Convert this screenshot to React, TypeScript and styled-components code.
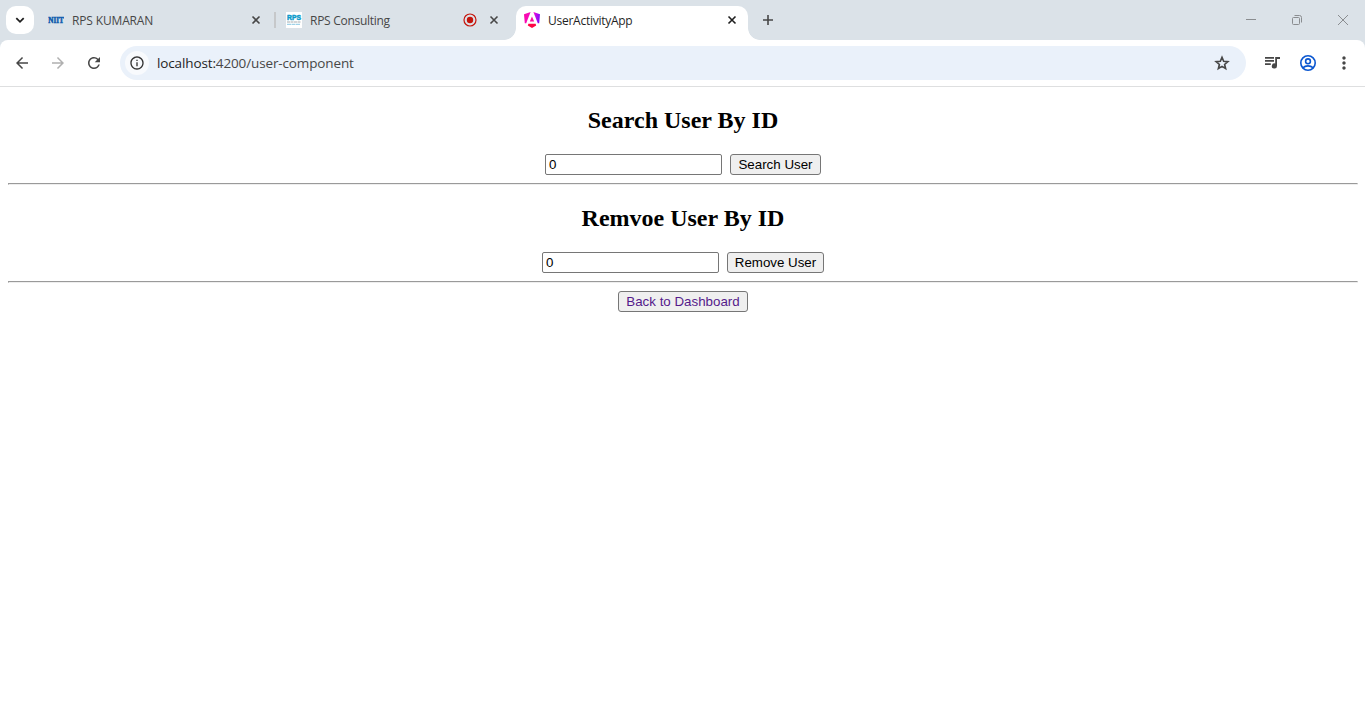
import React, { useState } from "react";
import styled, { createGlobalStyle } from "styled-components";
import {
  MdArrowBack,
  MdArrowForward,
  MdRefresh,
  MdInfoOutline,
  MdMoreVert,
} from "react-icons/md";

const GlobalStyle = createGlobalStyle`
  html, body { margin: 0; padding: 0; background: #fff; }
  * { box-sizing: border-box; }
`;

const Window = styled.div`
  display: flex;
  flex-direction: column;
  width: 100%;
  height: 100vh;
  overflow: hidden;
  background: #fff;
`;

const Chrome = styled.header`
  background: #dbe2e8;
  font-family: "Open Sans", "Noto Sans", sans-serif;
`;

const TabStrip = styled.div`
  display: flex;
  align-items: center;
  height: 40px;
  padding-left: 6px;
`;

const TabSearch = styled.div`
  display: flex;
  align-items: center;
  justify-content: center;
  width: 28px;
  height: 28px;
  margin-right: 6px;
  border-radius: 10px;
  background: #fff;
`;

const Tab = styled.div<{ $active?: boolean }>`
  position: relative;
  display: flex;
  align-items: center;
  gap: 8px;
  width: 232px;
  height: 34px;
  padding: 0 8px;
  padding-bottom: ${(p) => (p.$active ? "6px" : "0")};
  align-self: ${(p) => (p.$active ? "flex-end" : "center")};
  margin-left: ${(p) => (p.$active ? "6px" : "0")};
  border-radius: 10px 10px 0 0;
  background: ${(p) => (p.$active ? "#fff" : "transparent")};
  color: ${(p) => (p.$active ? "#1f1f1f" : "#474747")};

  &::before,
  &::after {
    content: "";
    display: ${(p) => (p.$active ? "block" : "none")};
    position: absolute;
    bottom: 0;
    width: 12px;
    height: 12px;
  }
  &::before {
    left: -12px;
    background: radial-gradient(circle at 0 0, transparent 11.5px, #fff 12.2px);
  }
  &::after {
    right: -12px;
    background: radial-gradient(circle at 100% 0, transparent 11.5px, #fff 12.2px);
  }
`;

const TabTitle = styled.span<{ $spacing: number }>`
  flex: 1;
  padding-top: 2px;
  font-size: 12px;
  line-height: 16px;
  letter-spacing: ${(p) => p.$spacing}px;
  white-space: nowrap;
`;

const Separator = styled.div`
  width: 2px;
  height: 16px;
  margin: 0 2px;
  background: #c6c8ca;
`;

const IconSlot = styled.span<{ $size?: number; $color?: string }>`
  display: flex;
  align-items: center;
  justify-content: center;
  flex: none;
  width: ${(p) => p.$size ?? 16}px;
  height: ${(p) => p.$size ?? 16}px;
  color: ${(p) => p.$color ?? "inherit"};
`;

const NewTab = styled(IconSlot)`
  margin-left: 12px;
`;

const WindowControls = styled.div`
  display: flex;
  margin-left: auto;
`;

const WindowButton = styled.div`
  display: flex;
  align-items: center;
  justify-content: center;
  width: 46px;
  height: 40px;

  &:last-child {
    width: 45px;
  }
`;

const Toolbar = styled.div`
  display: flex;
  align-items: center;
  height: 47px;
  padding: 0 11px 0 12px;
  border-bottom: 1px solid #dedfe0;
  border-radius: 8px 8px 0 0;
  background: #fff;
`;

const NavGroup = styled.div`
  display: flex;
  gap: 16px;
  margin-right: 16px;
`;

const ToolGroup = styled.div`
  display: flex;
  gap: 16px;
  margin-left: 16px;
`;

const AddressBar = styled.div`
  display: flex;
  align-items: center;
  flex: 1;
  height: 34px;
  padding: 0 14px 0 5px;
  border-radius: 17px;
  background: #eaf1fa;
`;

const SiteInfo = styled.span`
  display: flex;
  align-items: center;
  justify-content: center;
  width: 24px;
  height: 24px;
  margin-right: 8px;
  border-radius: 50%;
  background: #f8fafd;
  color: #333;
`;

const Url = styled.span`
  flex: 1;
  font-size: 13.5px;
  line-height: 20px;
  letter-spacing: -0.13px;
  color: #474747;
`;

const Host = styled.span`
  color: #1f1f1f;
`;

const Page = styled.main`
  display: flow-root;
  padding: 0 7px 0 8px;
  text-align: center;
  font-family: "Liberation Serif", serif;
  font-size: 16px;
  color: #000;
`;

const Heading = styled.h2`
  margin: 20px 0;
  font-size: 24px;
  line-height: 27px;
  font-weight: bold;
`;

const FormRow = styled.div`
  display: flex;
  justify-content: center;
  gap: 8px;
`;

const IdInput = styled.input`
  width: 177px;
  height: 21px;
  padding: 1px 3px;
  border: 1px solid #767676;
  border-radius: 2px;
  outline: none;
  background: #fff;
  font: 13.333px "Liberation Sans", sans-serif;
  color: #000;
`;

const Button = styled.button<{ $width: number; $visited?: boolean }>`
  width: ${(p) => p.$width}px;
  height: 21px;
  padding: 0;
  border: 1px solid #767676;
  border-radius: 3px;
  background: #efefef;
  font: 13.333px "Liberation Sans", sans-serif;
  white-space: nowrap;
  color: ${(p) => (p.$visited ? "#551a8b" : "#000")};
`;

const Rule = styled.hr`
  height: 2px;
  margin: 8px 0;
  border: 1px solid;
  border-color: #9a9a9a #eee #eee #9a9a9a;
`;

const CloseIcon = ({ color = "#474747" }: { color?: string }) => (
  <IconSlot $color={color}>
    <svg width="16" height="16" viewBox="0 0 16 16" stroke="currentColor" strokeWidth="1.6">
      <path d="M4.5 4.5l7 7M11.5 4.5l-7 7" />
    </svg>
  </IconSlot>
);

const NiitLogo = () => (
  <svg width="16" height="16" viewBox="0 0 16 16">
    <text x="0.2" y="10.7" fontFamily="Liberation Serif, serif" fontWeight="bold" fontSize="7.6" textLength="15.6" lengthAdjust="spacingAndGlyphs" fill="#0f5cae" stroke="#0f5cae" strokeWidth="0.5">
      NIIT
    </text>
  </svg>
);

const RpsLogo = () => (
  <svg width="16" height="16" viewBox="0 0 16 16">
    <rect width="16" height="16" fill="#fff" />
    <text x="1" y="8" fontFamily="Liberation Sans, sans-serif" fontWeight="bold" fontSize="8" textLength="14" lengthAdjust="spacingAndGlyphs" fill="#0c9bcb" stroke="#0c9bcb" strokeWidth="0.5">
      RPS
    </text>
    <path d="M1 10h14" stroke="#c4c7ca" strokeWidth="1.6" strokeDasharray="3 .5" />
    <path d="M1 12.4h13" stroke="#9fd2e8" strokeWidth="1.1" strokeDasharray="4 .5" />
  </svg>
);

const AngularLogo = () => (
  <svg width="16" height="16" viewBox="0 0 16 16">
    <defs>
      <linearGradient id="shield" gradientUnits="userSpaceOnUse" x1="0" y1="5" x2="16" y2="8">
        <stop offset="0" stopColor="#fa0aa8" />
        <stop offset="0.55" stopColor="#f40ad0" />
        <stop offset="0.8" stopColor="#a80af4" />
        <stop offset="1" stopColor="#7a0cf4" />
      </linearGradient>
    </defs>
    <g fill="url(#shield)">
      <path d="M6.6 0L0 2.3.8 11.2 2.2 11.2z" />
      <path d="M9.4 0L16 2.3 15.2 11.2 13.8 11.2z" />
      <path d="M8 4.4L10.2 9.4H5.8z" fill="#fa0aa0" />
    </g>
    <path d="M4.4 11.8h7.2l.6 1.7L8 16l-4.2-2.5z" fill="#ff0545" />
  </svg>
);

const Recording = () => (
  <IconSlot>
    <svg width="16" height="16" viewBox="0 0 16 16">
      <circle cx="8" cy="8" r="6" fill="none" stroke="#c5150c" strokeWidth="1.2" />
      <circle cx="8" cy="8" r="3.2" fill="#c5150c" />
    </svg>
  </IconSlot>
);

const StarIcon = () => (
  <svg width="18" height="18" viewBox="0 0 24 24" fill="none" stroke="#474747" strokeWidth="2.2">
    <path d="M12 4.4l2.2 5.3 5.6.5-4.3 3.7 1.3 5.5-4.8-2.9-4.8 2.9 1.3-5.5-4.3-3.7 5.6-.5z" />
  </svg>
);

const MediaIcon = () => (
  <svg width="20" height="20" viewBox="0 0 20 20" fill="#474747">
    <path d="M3 4h9v1.7H3zM3 7h9v1.7H3zM3 10.2h5.8v1.7H3z" />
    <path d="M13.2 4H18v1.9h-3v7.1a2.6 2.6 0 1 1-1.8-2.5z" />
  </svg>
);

const ProfileIcon = () => (
  <svg width="18" height="18" viewBox="0 0 18 18" fill="none" stroke="#0b57d0" strokeWidth="1.6">
    <circle cx="9" cy="9" r="7.2" />
    <circle cx="9" cy="7.3" r="2.4" />
    <path d="M3.7 13.8c1.5-1.2 3.3-1.9 5.3-1.9s3.8.7 5.3 1.9" />
  </svg>
);

function UserForm({ title, action, width }: { title: string; action: string; width: number }) {
  const [id, setId] = useState("0");
  return (
    <section>
      <Heading>{title}</Heading>
      <FormRow>
        <IdInput value={id} onChange={(e) => setId(e.target.value)} />
        <Button $width={width}>{action}</Button>
      </FormRow>
      <Rule />
    </section>
  );
}

export default function App() {
  return (
    <Window>
      <GlobalStyle />
      <Chrome>
        <TabStrip>
          <TabSearch>
            <svg width="10" height="8" viewBox="0 0 10 8" fill="none" stroke="#1f1f1f" strokeWidth="1.8">
              <path d="M1.3 2.2L5 5.8l3.7-3.6" />
            </svg>
          </TabSearch>
          <Tab>
            <NiitLogo />
            <TabTitle $spacing={-0.15}>RPS KUMARAN</TabTitle>
            <CloseIcon />
          </Tab>
          <Separator />
          <Tab>
            <RpsLogo />
            <TabTitle $spacing={-0.28}>RPS Consulting</TabTitle>
            <Recording />
            <CloseIcon />
          </Tab>
          <Tab $active>
            <AngularLogo />
            <TabTitle $spacing={-0.26}>UserActivityApp</TabTitle>
            <CloseIcon color="#1f1f1f" />
          </Tab>
          <NewTab $color="#474747">
            <svg width="16" height="16" viewBox="0 0 16 16" stroke="currentColor" strokeWidth="1.6">
              <path d="M8 3v10M3 8h10" />
            </svg>
          </NewTab>
          <WindowControls>
            <WindowButton>
              <svg width="10" height="10" viewBox="0 0 10 10" stroke="#8a8d90">
                <path d="M0 4.5h10" />
              </svg>
            </WindowButton>
            <WindowButton>
              <svg width="10" height="10" viewBox="0 0 10 10" fill="none" stroke="#8a8d90">
                <rect x="0.5" y="2.5" width="7" height="7" rx="1" />
                <path d="M2.5.5H7.5a2 2 0 0 1 2 2V7.5" />
              </svg>
            </WindowButton>
            <WindowButton>
              <svg width="10" height="10" viewBox="0 0 10 10" stroke="#8a8d90">
                <path d="M0 0l10 10M10 0L0 10" />
              </svg>
            </WindowButton>
          </WindowControls>
        </TabStrip>
        <Toolbar>
          <NavGroup>
            <IconSlot $size={20} $color="#474747"><MdArrowBack size={18} /></IconSlot>
            <IconSlot $size={20} $color="#b0b0b0"><MdArrowForward size={18} /></IconSlot>
            <IconSlot $size={20} $color="#474747"><MdRefresh size={18} /></IconSlot>
          </NavGroup>
          <AddressBar>
            <SiteInfo><MdInfoOutline size={16} /></SiteInfo>
            <Url><Host>localhost:</Host>4200/user-component</Url>
            <IconSlot $size={20}><StarIcon /></IconSlot>
          </AddressBar>
          <ToolGroup>
            <IconSlot $size={20}><MediaIcon /></IconSlot>
            <IconSlot $size={20}><ProfileIcon /></IconSlot>
            <IconSlot $size={20} $color="#474747"><MdMoreVert size={20} /></IconSlot>
          </ToolGroup>
        </Toolbar>
      </Chrome>
      <Page>
        <UserForm title="Search User By ID" action="Search User" width={91} />
        <UserForm title="Remvoe User By ID" action="Remove User" width={97} />
        <Button $width={130} $visited>Back to Dashboard</Button>
      </Page>
    </Window>
  );
}
